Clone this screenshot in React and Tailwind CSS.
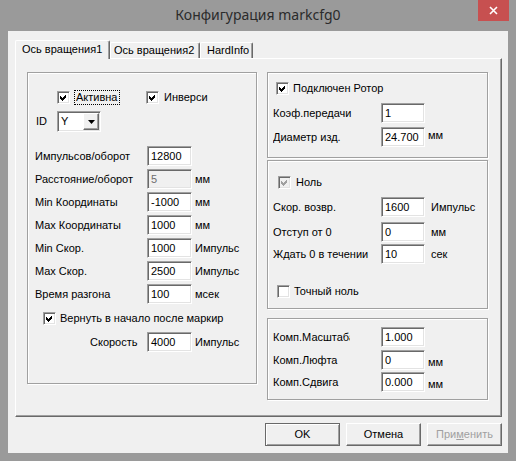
import React from "react";

const sunken =
  "border border-t-[#a0a0a0] border-l-[#a0a0a0] border-r-white border-b-white shadow-[inset_1px_1px_0_#696969,inset_-1px_-1px_0_#e3e3e3]";
const raised =
  "border border-t-white border-l-white border-r-[#696969] border-b-[#696969] shadow-[inset_-1px_-1px_0_#a0a0a0]";
const etched = "border border-[#a0a0a0] shadow-[1px_1px_0_#ffffff,inset_1px_1px_0_#ffffff]";

function Edit({ value, w = "w-[44px]", disabled }) {
  return (
    <div
      className={`h-[20px] ${w} shrink-0 ${sunken} pl-[3px] flex items-center whitespace-nowrap ${
        disabled ? "bg-[#f0f0f0] text-[#6d6d6d]" : "bg-white text-black"
      }`}
    >
      {value}
    </div>
  );
}

function Check({ checked, disabled }) {
  return (
    <div className={`w-[13px] h-[13px] shrink-0 ${sunken} ${disabled ? "bg-[#f0f0f0]" : "bg-white"} flex`}>
      {checked && (
        <svg width="11" height="11" viewBox="0 0 11 11" shapeRendering="crispEdges">
          <path d="M2 4 L4 6 L8 2 V5 L4 9 L2 7 Z" fill={disabled ? "#a0a0a0" : "#000000"} />
        </svg>
      )}
    </div>
  );
}

function CheckRow({ label, checked, disabled, gap = "ml-[4px]" }) {
  return (
    <div className="flex items-center h-[16px]">
      <Check checked={checked} disabled={disabled} />
      <span className={`${gap} whitespace-nowrap`}>{label}</span>
    </div>
  );
}

function Row({ label, value, unit, labelW = "w-[112px]", inputW, unitGap = "ml-[3px]", unitPad = "", disabled, className = "" }) {
  return (
    <div className={`flex items-center h-[20px] ${className}`}>
      <span className={`${labelW} shrink-0 whitespace-nowrap overflow-hidden`}>{label}</span>
      <Edit value={value} w={inputW} disabled={disabled} />
      {unit && <span className={`${unitGap} ${unitPad} whitespace-nowrap`}>{unit}</span>}
    </div>
  );
}

function Button({ children, primary, disabled }) {
  return (
    <div
      className={`w-[75px] h-[23px] flex items-center justify-center bg-[#f0f0f0] ${
        primary
          ? "border border-[#696969] shadow-[inset_1px_1px_0_#ffffff,inset_-1px_-1px_0_#a0a0a0]"
          : raised
      } ${disabled ? "text-[#a0a0a0]" : "text-black"}`}
    >
      {children}
    </div>
  );
}

function LeftGroup() {
  const rows = [
    ["Импульсов/оборот", "12800", ""],
    ["Расстояние/оборот", "5", "мм", true],
    ["Min Координаты", "-1000", "мм"],
    ["Max Координаты", "1000", "мм"],
    ["Min Скор.", "1000", "Импульс"],
    ["Max Скор.", "2500", "Импульс"],
    ["Время разгона", "100", "мсек"],
  ];

  return (
    <div className={`w-[230px] h-[312px] ${etched} flex flex-col`}>
      <div className="flex items-center mt-[16px] pl-[29px]">
        <div className="w-[89px] flex items-center h-[16px]">
          <Check checked />
          <span className="ml-[4px] border border-dotted border-black px-[1px]">Активна</span>
        </div>
        <CheckRow label="Инверси" checked gap="ml-[5px]" />
      </div>

      <div className="flex items-center mt-[6px] pl-[8px]">
        <span className="w-[21px]">ID</span>
        <div className={`w-[44px] h-[21px] ${sunken} bg-white flex items-center`}>
          <span className="flex-1 pl-[3px]">Y</span>
          <div className={`w-[16px] h-[17px] mr-[1px] bg-[#f0f0f0] ${raised} flex items-center justify-center`}>
            <svg width="7" height="4" viewBox="0 0 7 4">
              <path d="M0 0 H7 L3.5 4 Z" fill="#000" />
            </svg>
          </div>
        </div>
      </div>

      <div className="flex flex-col gap-[3px] mt-[14px] pl-[7px]">
        {rows.map(([label, value, unit, disabled]) => (
          <Row key={label} label={label} value={value} unit={unit} inputW="w-[45px]" disabled={disabled} />
        ))}
      </div>

      <div className="mt-[6px] pl-[15px]">
        <CheckRow label="Вернуть в начало после маркир" checked />
      </div>

      <div className="mt-[6px] pl-[62px]">
        <Row label="Скорость" value="4000" unit="Импульс" labelW="w-[57px]" inputW="w-[45px]" />
      </div>
    </div>
  );
}

function RightGroups() {
  return (
    <div className="flex flex-col">
      <div className={`w-[221px] h-[86px] ${etched} flex flex-col`}>
        <div className="mt-[7px] pl-[8px]">
          <CheckRow label="Подключен Ротор" checked />
        </div>
        <div className="flex flex-col gap-[4px] mt-[7px] pl-[5px]">
          <Row label="Коэф.передачи" value="1" labelW="w-[108px]" />
          <Row label="Диаметр изд." value="24.700" unit="мм" labelW="w-[108px]" unitPad="pb-[3px]" />
        </div>
      </div>

      <div className={`w-[221px] h-[149px] mt-[2px] ${etched} flex flex-col`}>
        <div className="mt-[13px] pl-[10px]">
          <CheckRow label="Ноль" checked disabled gap="ml-[5px]" />
        </div>
        <div className="flex flex-col mt-[7px] pl-[5px]">
          <Row label="Скор. возвр." value="1600" unit="Импульс" labelW="w-[108px]" unitGap="ml-[6px]" />
          <Row label="Отступ от 0" value="0" unit="мм" labelW="w-[108px]" unitGap="ml-[6px]" className="mt-[5px]" />
          <Row label="Ждать 0 в течении" value="10" unit="сек" labelW="w-[108px]" unitGap="ml-[6px]" className="mt-[2px]" />
        </div>
        <div className="mt-[19px] pl-[9px]">
          <CheckRow label="Точный ноль" />
        </div>
      </div>

      <div className={`w-[221px] h-[82px] mt-[9px] ${etched} flex flex-col`}>
        <div className="flex flex-col mt-[8px] pl-[5px]">
          <div className="flex items-center h-[20px]">
            <div className="w-[108px] shrink-0">
              <div className="w-[77px] overflow-hidden whitespace-nowrap">Комп.Масштаба</div>
            </div>
            <Edit value="1.000" />
          </div>
          <Row label="Комп.Люфта" value="0" unit="мм" labelW="w-[108px]" unitPad="pt-[5px]" className="mt-[3px]" />
          <Row label="Комп.Сдвига" value="0.000" unit="мм" labelW="w-[108px]" unitPad="pt-[5px]" className="mt-[2px]" />
        </div>
      </div>
    </div>
  );
}

export default function App() {
  return (
    <div className="w-[516px] h-[461px] bg-[#9a9a9a] flex flex-col font-['Liberation_Sans',Arial,sans-serif] text-[11px] leading-[13px] text-black">
      {/* title bar */}
      <div className="h-[31px] shrink-0 grid grid-cols-[1fr_auto_1fr]">
        <div />
        <div className="pt-[5px] font-['Noto_Sans',sans-serif] text-[14px] leading-[20px] text-[#2b2b2b]">
          Конфигурация markcfg0
        </div>
        <div className="flex justify-end items-start pr-[7px]">
          <div className="w-[31px] h-[21px] bg-[#c75050] flex items-center justify-center">
            <svg width="9" height="9" viewBox="0 0 9 9">
              <path d="M1 1 L8 8 M8 1 L1 8" stroke="#fff" strokeWidth="1.6" />
            </svg>
          </div>
        </div>
      </div>

      {/* client area */}
      <div className="mx-[8px] mb-[8px] flex-1 bg-[#f0f0f0] flex flex-col pl-[7px] pr-[6px] pt-[9px]">
        <div className="flex items-end">
          <div className="w-[95px] h-[19px] -mb-[1px] relative z-10 bg-[#f0f0f0] border-t border-l border-r border-t-white border-l-white border-r-[#696969] rounded-t-[2px] shadow-[inset_-1px_0_0_#a0a0a0] pl-[6px] pt-[2px]">
            Ось вращения1
          </div>
          <div className="w-[90px] h-[16px] bg-[#f0f0f0] border-t border-l border-r border-t-white border-l-white border-r-[#696969] rounded-t-[2px] shadow-[inset_-1px_0_0_#a0a0a0] pl-[3px] pt-[1px]">
            Ось вращения2
          </div>
          <div className="w-[53px] h-[16px] bg-[#f0f0f0] border-t border-l border-r border-t-white border-l-white border-r-[#696969] rounded-t-[2px] shadow-[inset_-1px_0_0_#a0a0a0] pl-[6px] pt-[1px]">
            HardInfo
          </div>
        </div>

        <div className={`w-[487px] h-[359px] bg-[#f0f0f0] ${raised} flex items-start pl-[11px] pt-[13px]`}>
          <LeftGroup />
          <div className="ml-[10px]">
            <RightGroups />
          </div>
        </div>

        <div className="flex justify-end gap-[6px] mt-[6px]">
          <Button primary>OK</Button>
          <Button>Отмена</Button>
          <Button disabled>
            <span>
              При<u>м</u>енить
            </span>
          </Button>
        </div>
      </div>
    </div>
  );
}
